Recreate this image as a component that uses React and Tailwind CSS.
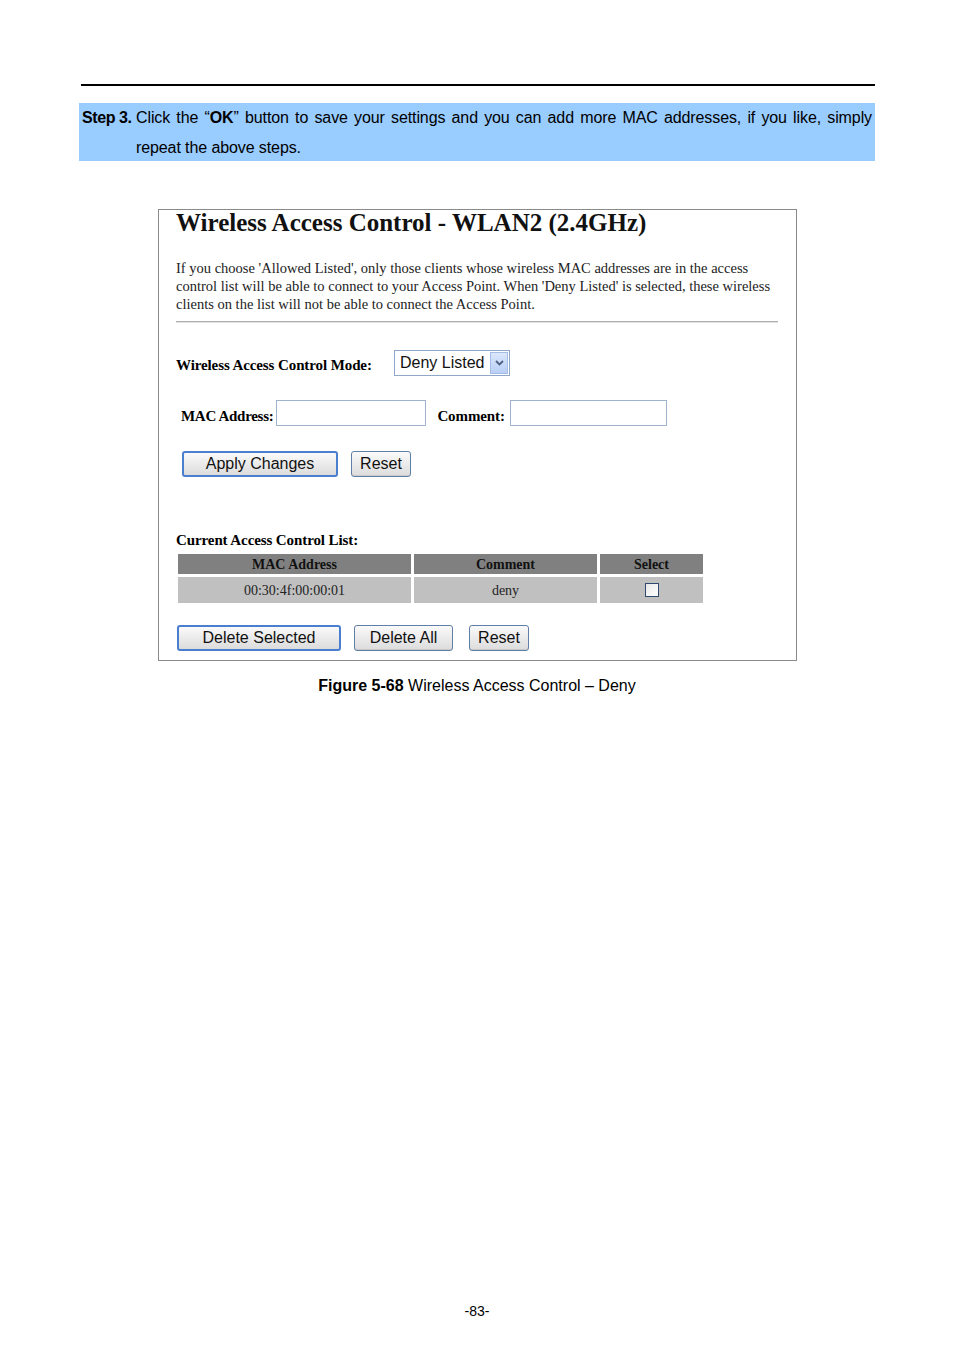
export default function App() {
  const serif = { fontFamily: '"Liberation Serif", "Times New Roman", serif' }
  const sans = { fontFamily: '"Liberation Sans", Arial, sans-serif' }

  const btn =
    'h-[26px] border border-[#5f7fa8] rounded-[3px] bg-gradient-to-b from-[#fafafa] to-[#dcdcdc] text-[16px] text-[#111] leading-none shadow-[inset_0_-1px_0_#c9c9c9]'
  const btnBlue =
    'h-[26px] border-2 border-[#4a7fcf] rounded-[3px] bg-gradient-to-b from-[#fafafa] to-[#dcdcdc] text-[16px] text-[#111] leading-none'

  return (
    <div className="w-[954px] h-[1350px] bg-white relative" style={sans}>
      <div className="pt-[84px] pl-[81px] pr-[79px]">
        <div className="h-[2px] bg-black" />
      </div>

      <div className="mt-[17px] ml-[79px] w-[796px] h-[58px] bg-[#99ccff] text-[16px] text-black pr-[3px] flex">
        <div className="font-bold pl-[3px] w-[57px] shrink-0 leading-[30px] tracking-[-0.4px]">Step 3.</div>
        <div className="flex-1 min-w-0 leading-[30px] tracking-[-0.1px]">
          <div className="text-justify [text-align-last:justify]">
            Click the “<b>OK</b>” button to save your settings and you can add more MAC addresses, if you like, simply
          </div>
          <div>repeat the above steps.</div>
        </div>
      </div>

      <div className="mt-[48px] ml-[158px] w-[639px] h-[452px] border border-[#8a8a8a] pl-[17px] pr-[18px]" style={serif}>
        <h1 className="font-bold text-[25px] leading-[26px] text-[#111]">
          Wireless Access Control - WLAN2 (2.4GHz)
        </h1>
        <p className="mt-[23px] text-[14.5px] leading-[18px] text-[#222]">
          If you choose 'Allowed Listed', only those clients whose wireless MAC addresses are in the access
          <br />
          control list will be able to connect to your Access Point. When 'Deny Listed' is selected, these wireless
          <br />
          clients on the list will not be able to connect the Access Point.
        </p>
        <div className="mt-[8px] h-[2px] bg-[#b0b0b0] border-b border-[#e0e0e0]" />

        <div className="mt-[27px] flex items-center h-[26px]">
          <span className="font-bold text-[15px] leading-[18px] tracking-[-0.1px] w-[218px] mt-[4px]">Wireless Access Control Mode:</span>
          <div className="w-[116px] h-[26px] border border-[#8fa8c9] flex items-center justify-between pl-[5px] pr-[1px]" style={sans}>
            <span className="text-[16px] text-[#111]">Deny Listed</span>
            <span className="w-[18px] h-[22px] bg-gradient-to-b from-[#dbe7fb] to-[#b9cff5] border border-[#a5bde6] flex items-center justify-center">
              <svg width="9" height="6" viewBox="0 0 9 6">
                <path d="M1 1 L4.5 4.5 L8 1" fill="none" stroke="#4d6185" strokeWidth="1.8" />
              </svg>
            </span>
          </div>
        </div>

        <div className="mt-[24px] flex items-center h-[26px] pl-[5px]">
          <span className="font-bold text-[15px] leading-[18px] tracking-[-0.3px] mt-[6px] mr-[3px]">MAC Address:</span>
          <div className="w-[150px] h-[26px] border border-[#9fb3cc]" />
          <span className="font-bold text-[15px] leading-[18px] tracking-[-0.1px] mt-[6px] ml-[11px] mr-[5px]">Comment:</span>
          <div className="w-[157px] h-[26px] border border-[#9fb3cc]" />
        </div>

        <div className="mt-[25px] flex items-center pl-[6px]" style={sans}>
          <button className={btnBlue + ' w-[156px]'}>Apply Changes</button>
          <button className={btn + ' w-[60px] ml-[13px]'}>Reset</button>
        </div>

        <div className="mt-[53px] font-bold text-[15px] leading-[20px] tracking-[-0.1px]">Current Access Control List:</div>
        <div className="mt-[4px] ml-[2px] flex flex-col gap-[3px] w-[525px]">
          <div className="flex gap-[3px] h-[20px] text-[14px] font-bold text-[#111]">
            <div className="w-[233px] bg-[#808080] flex items-center justify-center">MAC Address</div>
            <div className="w-[183px] bg-[#808080] flex items-center justify-center">Comment</div>
            <div className="flex-1 bg-[#808080] flex items-center justify-center">Select</div>
          </div>
          <div className="flex gap-[3px] h-[26px] text-[14px] text-[#222]">
            <div className="w-[233px] bg-[#c0c0c0] flex items-center justify-center">00:30:4f:00:00:01</div>
            <div className="w-[183px] bg-[#c0c0c0] flex items-center justify-center">deny</div>
            <div className="flex-1 bg-[#c0c0c0] flex items-center justify-center">
              <span className="w-[14px] h-[14px] border border-[#2e4a6e] bg-gradient-to-br from-[#e8e8e8] to-white" />
            </div>
          </div>
        </div>

        <div className="mt-[22px] flex items-center pl-[1px]" style={sans}>
          <button className={btnBlue + ' w-[164px]'}>Delete Selected</button>
          <button className={btn + ' w-[99px] ml-[13px]'}>Delete All</button>
          <button className={btn + ' w-[60px] ml-[16px]'}>Reset</button>
        </div>
      </div>

      <p className="mt-[13px] text-center text-[16px] text-black">
        <b>Figure 5-68</b> Wireless Access Control – Deny
      </p>

      <p className="absolute top-[1301px] left-0 right-0 text-center text-[14px] text-black">-83-</p>
    </div>
  )
}
